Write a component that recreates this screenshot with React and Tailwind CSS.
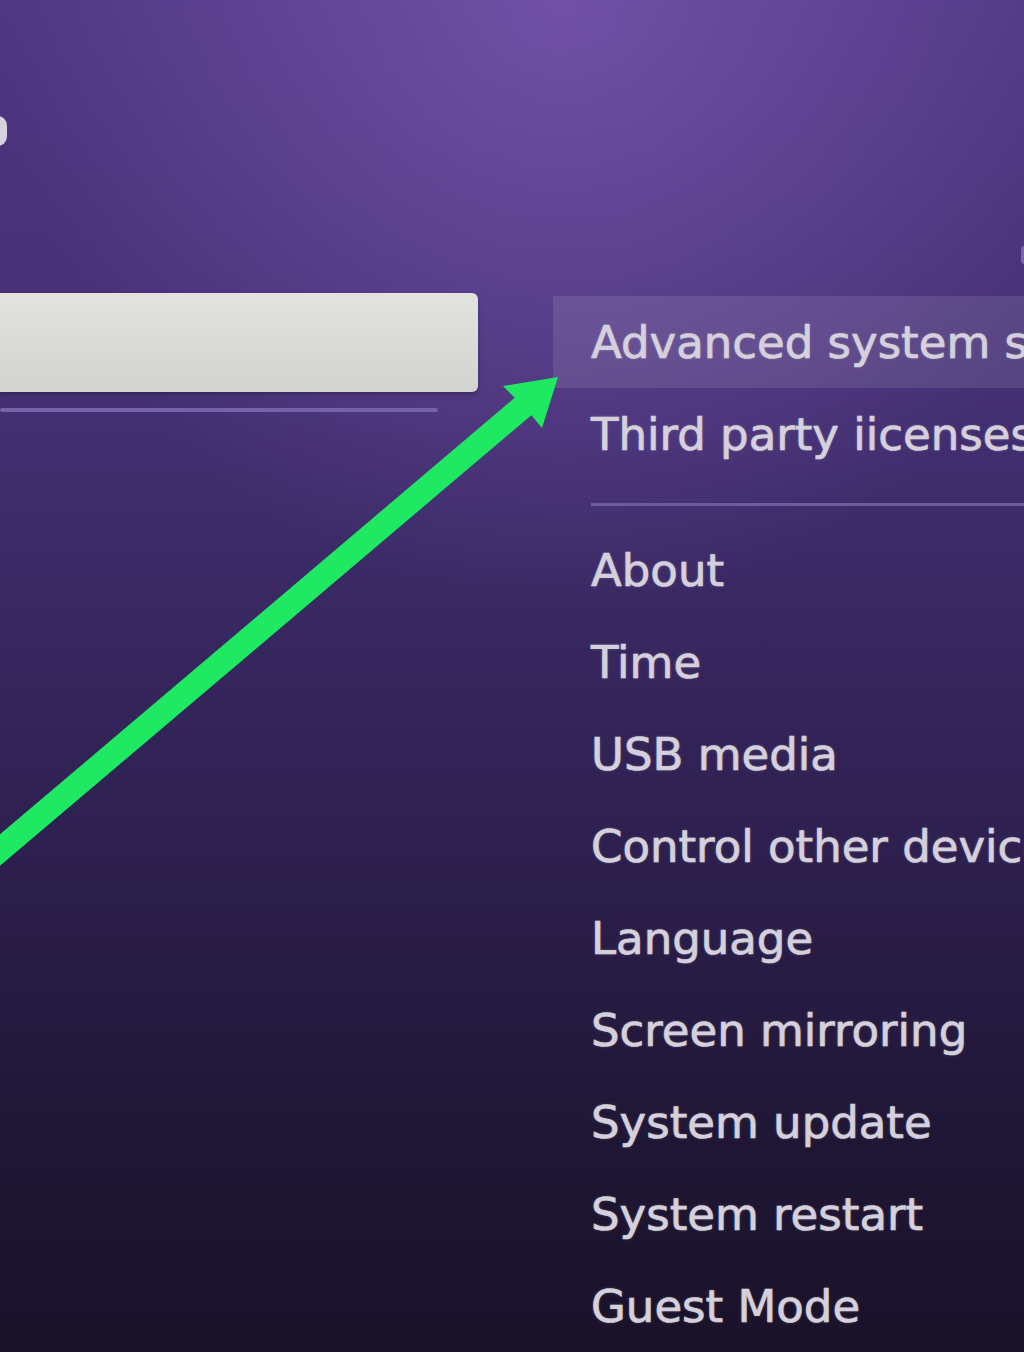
import React from 'react';

const topItems = ['Advanced system settings', 'Third party iicenses'];
const menuItems = [
  'About',
  'Time',
  'USB media',
  'Control other devices',
  'Language',
  'Screen mirroring',
  'System update',
  'System restart',
  'Guest Mode',
];

const MenuRow = ({ label, active }) => (
  <div
    className={`h-[92px] flex items-center pl-[38px] whitespace-nowrap ${
      active ? 'bg-white/10' : ''
    }`}
  >
    <span className="text-[45px] leading-none text-[#d5d1dc] font-['DejaVu_Sans',sans-serif] [-webkit-text-stroke:0.7px_#d5d1dc] [text-shadow:0_0_3px_rgba(255,255,255,0.25)]">
      {label}
    </span>
  </div>
);

const App = () => {
  return (
    <div className="relative w-[1024px] h-[1352px] overflow-hidden flex bg-[radial-gradient(ellipse_55%_45%_at_55%_0%,rgba(135,98,190,0.6),transparent_100%),linear-gradient(to_bottom,#4f3783,#432f72_30%,#2f2152_60%,#1f1634_85%,#1a1229)]">
      {/* left column */}
      <div className="w-[553px] shrink-0 pt-[293px]">
        <div className="w-[478px] h-[99px] rounded-r-md bg-gradient-to-b from-[#e2e2df] to-[#d3d3d1] shadow-[0_2px_4px_rgba(0,0,0,0.25)]" />
        <div className="mt-[16px] w-[438px] h-[4px] rounded-full bg-[#7562a8]" />
      </div>

      {/* right column */}
      <div className="flex-1 pt-[296px]">
        <MenuRow label={topItems[0]} active />
        <MenuRow label={topItems[1]} />
        <div className="h-[44px] flex items-center pl-[38px]">
          <div className="w-full h-[3px] mt-[4px] bg-[#6f5c9f]" />
        </div>
        {menuItems.map((item) => (
          <MenuRow key={item} label={item} />
        ))}
      </div>

      {/* edge glyphs cut off by the frame */}
      <div className="absolute left-[-12px] top-[116px] w-[19px] h-[30px] rounded-full bg-[#d6d2de]" />
      <div className="absolute right-[-4px] top-[246px] w-[7px] h-[18px] rounded-full bg-[#8d7ab8]/70" />

      {/* green arrow */}
      <svg
        className="absolute inset-0 pointer-events-none"
        width="1024"
        height="1352"
        viewBox="0 0 1024 1352"
      >
        <line x1="-20" y1="867" x2="526" y2="404" stroke="#1fe862" strokeWidth="24" />
        <polygon points="558,377 542,428 527,410 521,404 503,386" fill="#1fe862" />
      </svg>
    </div>
  );
};

export default App;
